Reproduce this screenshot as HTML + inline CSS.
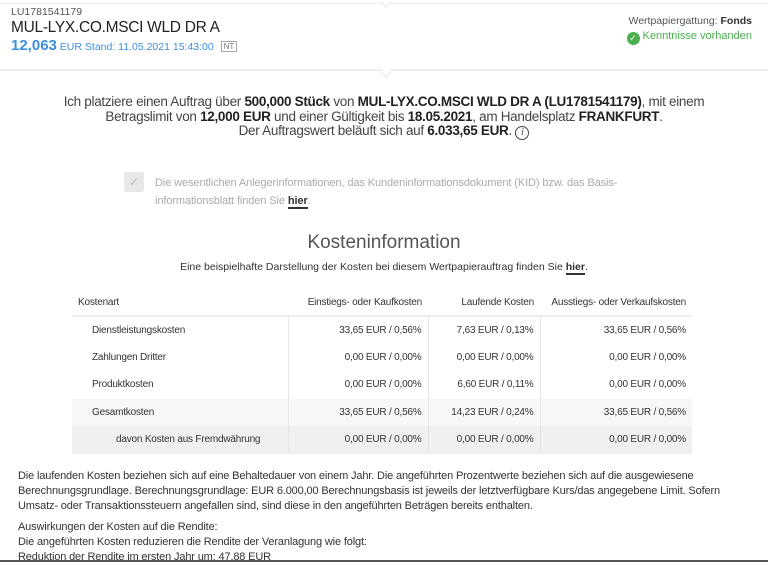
<!DOCTYPE html>
<html><head><meta charset="utf-8"><style>
*{margin:0;padding:0;box-sizing:border-box}
body{width:768px;height:562px;overflow:hidden;background:#fff;font-family:"Liberation Sans",sans-serif;color:#333;position:relative}
.abs{position:absolute;white-space:nowrap}
.hdr{position:absolute;left:0;top:3px;width:768px;height:68px;border-top:1px solid #eee;border-bottom:2px solid #eee;background:#fff}
b{font-weight:bold;color:#222}
table{position:absolute;left:72px;top:290px;width:620px;border-collapse:collapse;font-size:10px;color:#333}
td,th{height:27.5px;padding:0 6px;text-align:right;font-weight:normal;letter-spacing:-0.2px}
th{height:26px;border-bottom:2px solid #eee}
td:first-child,th:first-child{text-align:left}
td:first-child{padding-left:20px}
td+td{border-left:1px solid #e6e6e6}
.p{position:absolute;left:18px;font-size:11px;color:#333;line-height:15px;letter-spacing:-0.15px}
</style></head><body>
<div class="hdr"></div>
<div class="abs" style="left:382px;top:-2px;width:8px;height:8px;border-right:1px solid #e6e6e6;border-bottom:1px solid #e6e6e6;transform:rotate(45deg);background:#fff"></div>
<div class="abs" style="left:382px;top:68px;width:8px;height:8px;border-right:1px solid #e6e6e6;border-bottom:1px solid #e6e6e6;transform:rotate(45deg);background:#fff"></div>
<div class="abs" style="left:11px;top:6px;font-size:10.5px;color:#555">LU1781541179</div>
<div class="abs" style="left:11px;top:19px;font-size:15.5px;color:#222;letter-spacing:-0.3px">MUL-LYX.CO.MSCI WLD DR A</div>
<div class="abs" style="left:11px;top:37px;color:#3d8fe0;font-size:10.5px"><span style="font-size:15px;font-weight:bold">12,063</span> EUR Stand: 11.05.2021 15:43:00 <span style="display:inline-block;border:1px solid #aaa;color:#777;font-size:8px;padding:0 2px;margin-left:4px;vertical-align:1px">NT</span></div>
<div class="abs" style="right:16px;top:15px;font-size:10.5px;color:#555">Wertpapiergattung: <b style="font-weight:bold;color:#333">Fonds</b></div>
<div class="abs" style="right:16px;top:30px;font-size:11px;color:#4caf50"><span style="display:inline-block;width:13px;height:13px;border-radius:50%;background:#4caf50;color:#fff;font-size:9px;text-align:center;line-height:13px;vertical-align:-2px;margin-right:3px">✓</span>Kenntnisse vorhanden</div>
<div class="abs" style="left:0;width:768px;top:95px;text-align:center;font-size:13.5px;line-height:14.5px;color:#444;letter-spacing:-0.3px">Ich platziere einen Auftrag über <b>500,000 Stück</b> von <b>MUL-LYX.CO.MSCI WLD DR A (LU1781541179)</b>, mit einem<br>Betragslimit von <b>12,000 EUR</b> und einer Gültigkeit bis <b>18.05.2021</b>, am Handelsplatz <b>FRANKFURT</b>.<br>Der Auftragswert beläuft sich auf <b>6.033,65 EUR</b>. <span style="display:inline-block;width:14px;height:14px;border:1px solid #444;border-radius:50%;font-size:10px;line-height:12px;font-style:italic;font-family:'Liberation Serif',serif">i</span></div>
<div class="abs" style="left:124px;top:172px;width:20px;height:20px;background:#e8e8e8;border-radius:2px;color:#bbb;font-size:12px;text-align:center;line-height:20px">✓</div>
<div class="abs" style="left:155px;top:174px;font-size:11px;line-height:18px;color:#aaa;letter-spacing:-0.1px">Die wesentlichen Anlegerinformationen, das Kundeninformationsdokument (KID) bzw. das Basis-<br>informationsblatt finden Sie <span style="color:#333;font-weight:bold;border-bottom:2px solid #333">hier</span>.</div>
<div class="abs" style="left:0;width:768px;top:232px;text-align:center;font-size:19px;color:#555">Kosteninformation</div>
<div class="abs" style="left:0;width:768px;top:261px;text-align:center;font-size:10.5px;color:#333">Eine beispielhafte Darstellung der Kosten bei diesem Wertpapierauftrag finden Sie <span style="font-weight:bold;border-bottom:2px solid #333">hier</span>.</div>
<table>
<tr><th style="padding-left:6px;width:216px">Kostenart</th><th style="width:140px">Einstiegs- oder Kaufkosten</th><th style="width:112px">Laufende Kosten</th><th>Ausstiegs- oder Verkaufskosten</th></tr>
<tr><td>Dienstleistungskosten</td><td>33,65 EUR / 0,56%</td><td>7,63 EUR / 0,13%</td><td>33,65 EUR / 0,56%</td></tr>
<tr><td>Zahlungen Dritter</td><td>0,00 EUR / 0,00%</td><td>0,00 EUR / 0,00%</td><td>0,00 EUR / 0,00%</td></tr>
<tr><td>Produktkosten</td><td>0,00 EUR / 0,00%</td><td>6,60 EUR / 0,11%</td><td>0,00 EUR / 0,00%</td></tr>
<tr style="background:#f7f7f7"><td>Gesamtkosten</td><td>33,65 EUR / 0,56%</td><td>14,23 EUR / 0,24%</td><td>33,65 EUR / 0,56%</td></tr>
<tr style="background:#f0f0f0"><td style="padding-left:44px">davon Kosten aus Fremdwährung</td><td>0,00 EUR / 0,00%</td><td>0,00 EUR / 0,00%</td><td>0,00 EUR / 0,00%</td></tr>
</table>
<div class="p" style="top:469px">Die laufenden Kosten beziehen sich auf eine Behaltedauer von einem Jahr. Die angeführten Prozentwerte beziehen sich auf die ausgewiesene<br>Berechnungsgrundlage. Berechnungsgrundlage: EUR 6.000,00 Berechnungsbasis ist jeweils der letztverfügbare Kurs/das angegebene Limit. Sofern<br>Umsatz- oder Transaktionssteuern angefallen sind, sind diese in den angeführten Beträgen bereits enthalten.</div>
<div class="p" style="top:520px">Auswirkungen der Kosten auf die Rendite:<br>Die angeführten Kosten reduzieren die Rendite der Veranlagung wie folgt:<br>Reduktion der Rendite im ersten Jahr um: 47,88 EUR</div>
<div class="abs" style="left:0;top:560px;width:768px;height:2px;background:#555"></div>
</body></html>
